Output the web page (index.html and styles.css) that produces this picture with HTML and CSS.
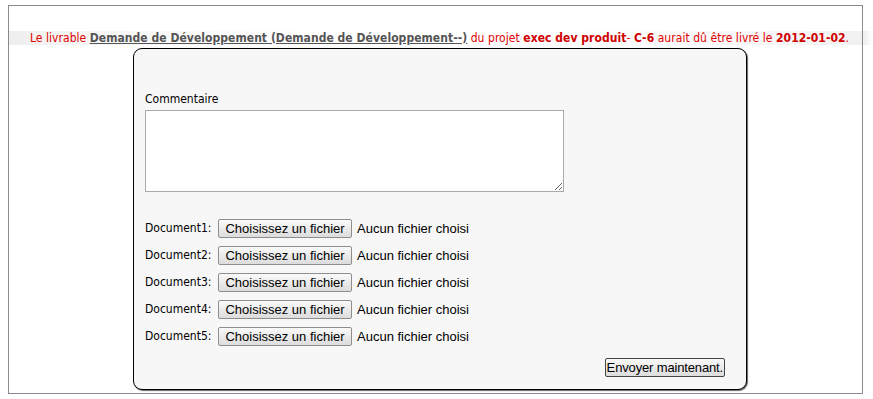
FILE: index.html
```html
<!DOCTYPE html>
<html lang="fr">
<head>
<meta charset="utf-8">
<title>Livrable</title>
<link rel="stylesheet" href="styles.css">
</head>
<body>
<div class="page">
  <p class="notice">Le livrable <a class="notice-link" href="#">Demande de Développement (Demande de Développement--)</a> du projet <b>exec dev produit</b>- <b>C-6</b> aurait dû être livré le <b>2012-01-02</b>.</p>
  <form class="panel">
    <label class="field-label" for="comment">Commentaire</label>
    <textarea id="comment" class="comment"></textarea>
    <div class="docs">
      <div class="doc-row"><span class="doc-label">Document1:</span><button type="button" class="btn">Choisissez un fichier</button><span class="doc-status">Aucun fichier choisi</span></div>
      <div class="doc-row"><span class="doc-label">Document2:</span><button type="button" class="btn">Choisissez un fichier</button><span class="doc-status">Aucun fichier choisi</span></div>
      <div class="doc-row"><span class="doc-label">Document3:</span><button type="button" class="btn">Choisissez un fichier</button><span class="doc-status">Aucun fichier choisi</span></div>
      <div class="doc-row"><span class="doc-label">Document4:</span><button type="button" class="btn">Choisissez un fichier</button><span class="doc-status">Aucun fichier choisi</span></div>
      <div class="doc-row"><span class="doc-label">Document5:</span><button type="button" class="btn">Choisissez un fichier</button><span class="doc-status">Aucun fichier choisi</span></div>
    </div>
    <div class="actions"><button type="submit" class="btn btn-submit">Envoyer maintenant.</button></div>
  </form>
</div>
</body>
</html>
```
FILE: styles.css
```css
html, body {
  background: #fff;
}
body {
  margin: 5px 0 0 8px;
  font-family: "DejaVu Sans Condensed", "DejaVu Sans", sans-serif;
  background-image: linear-gradient(to right, #ededed 0%, #f2f2f2 3%, #fbfbfb 25%, #ffffff 50%, #fbfbfb 75%, #f3f3f3 97%, #f0f0f0 99%, #ffffff 100%);
  background-size: 100% 14px;
  background-position: 0 26px;
  background-repeat: no-repeat;
}
.page {
  box-sizing: border-box;
  width: 855px;
  height: 389px;
  border: 1px solid #8a8a8a;
  padding-top: 25px;
}
.notice {
  margin: 0;
  padding-left: 8px;
  height: 14px;
  line-height: 14px;
  font-size: 12px;
  letter-spacing: 0.05px;
  text-align: center;
  color: #e10000;
  white-space: nowrap;
}
.notice b {
  color: #d00000;
}
.notice-link {
  color: #555;
  font-weight: bold;
  text-decoration: underline;
}
.panel {
  box-sizing: border-box;
  margin: 3px 0 0 124px;
  width: 614px;
  height: 342px;
  border: 1px solid #000;
  border-radius: 9px;
  background: #f7f7f7;
  box-shadow: 1px 1px 1px #666;
  padding: 43px 0 0 11px;
  display: flex;
  flex-direction: column;
  align-items: flex-start;
}
.field-label {
  display: block;
  font-size: 12px;
  line-height: 15px;
  color: #000;
}
.comment {
  display: block;
  box-sizing: border-box;
  margin: 3px 0 0 0;
  width: 419px;
  height: 82px;
  border: 1px solid #a9a9a9;
  background: #fff;
  padding: 2px;
}
.docs {
  margin-top: 26px;
  display: flex;
  flex-direction: column;
  gap: 7px;
}
.doc-row {
  display: flex;
  align-items: center;
  height: 20px;
}
.doc-label {
  font-size: 12px;
  width: 73px;
  color: #000;
}
.btn {
  box-sizing: border-box;
  height: 19px;
  margin: 0;
  padding: 0 6px;
  font-family: "Liberation Sans", Arial, sans-serif;
  font-size: 13px;
  line-height: 17px;
  color: #000;
  border: 1px solid #8e8e8e;
  border-radius: 2px;
  background: linear-gradient(#fafafa, #dcdcdc);
  white-space: nowrap;
}
.doc-row .btn {
  width: 134px;
}
.doc-status {
  margin-left: 5px;
  font-family: "Liberation Sans", Arial, sans-serif;
  font-size: 13px;
  color: #000;
}
.actions {
  align-self: stretch;
  display: flex;
  justify-content: flex-end;
  padding-right: 21px;
  margin-top: 12px;
}
.btn-submit {
  padding: 0 1px;
  letter-spacing: -0.15px;
  border-color: #444;
  height: 19px;
}
```
